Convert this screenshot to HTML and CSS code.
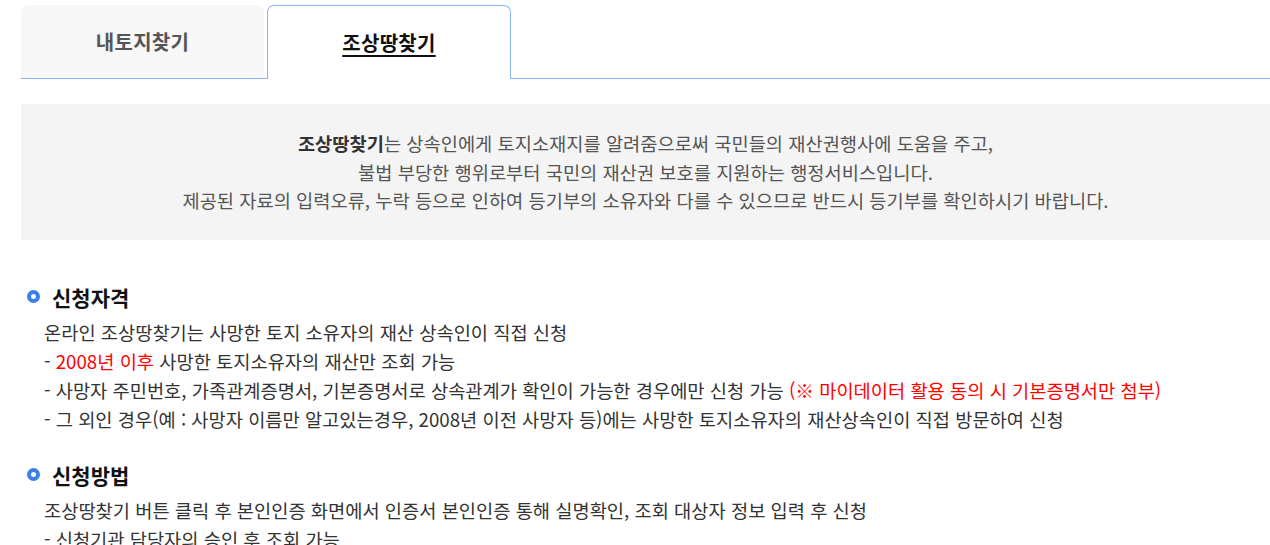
FILE: index.html
```html
<!DOCTYPE html>
<html lang="ko">
<head>
<meta charset="utf-8">
<title>조상땅찾기</title>
<link rel="stylesheet" href="styles.css">
</head>
<body>
<div class="page">
  <div class="tabs">
    <a class="tab">내토지찾기</a>
    <a class="tab active"><span>조상땅찾기</span></a>
  </div>
  <div class="intro">
    <p><strong>조상땅찾기</strong>는 상속인에게 토지소재지를 알려줌으로써 국민들의 재산권행사에 도움을 주고,</p>
    <p>불법 부당한 행위로부터 국민의 재산권 보호를 지원하는 행정서비스입니다.</p>
    <p>제공된 자료의 입력오류, 누락 등으로 인하여 등기부의 소유자와 다를 수 있으므로 반드시 등기부를 확인하시기 바랍니다.</p>
  </div>
  <div class="section">
    <h3 class="title"><span class="dot"></span>신청자격</h3>
    <ul class="desc">
      <li>온라인 조상땅찾기는 사망한 토지 소유자의 재산 상속인이 직접 신청</li>
      <li>- <span class="red">2008년 이후</span> 사망한 토지소유자의 재산만 조회 가능</li>
      <li>- 사망자 주민번호, 가족관계증명서, 기본증명서로 상속관계가 확인이 가능한 경우에만 신청 가능 <span class="red">(※ 마이데이터 활용 동의 시 기본증명서만 첨부)</span></li>
      <li>- 그 외인 경우(예 : 사망자 이름만 알고있는경우, 2008년 이전 사망자 등)에는 사망한 토지소유자의 재산상속인이 직접 방문하여 신청</li>
    </ul>
  </div>
  <div class="section">
    <h3 class="title"><span class="dot"></span>신청방법</h3>
    <ul class="desc">
      <li>조상땅찾기 버튼 클릭 후 본인인증 화면에서 인증서 본인인증 통해 실명확인, 조회 대상자 정보 입력 후 신청</li>
      <li>- 신청기관 담당자의 승인 후 조회 가능</li>
    </ul>
  </div>
</div>
</body>
</html>
```
FILE: styles.css
```css
html, body {
  margin: 0;
  padding: 0;
  background: #fff;
  overflow: hidden;
}
body {
  font-family: "Noto Sans CJK KR", "Noto Sans", sans-serif;
  color: #333;
}
.page {
  padding: 5px 0 0 21px;
}
.tabs {
  display: flex;
  gap: 3px;
  border-bottom: 1px solid #8ab4f8;
  height: 73px;
}
.tab {
  box-sizing: border-box;
  width: 243px;
  height: 73px;
  display: flex;
  align-items: center;
  justify-content: center;
  background: #f7f7f7;
  border-radius: 8px 8px 0 0;
  font-size: 20px;
  letter-spacing: 0.3px;
  font-weight: bold;
  color: #555;
  cursor: pointer;
}
.tab.active {
  width: 244px;
  height: 74px;
  background: #fff;
  border: 1px solid #8ab4f8;
  border-bottom: none;
  border-radius: 7px 7px 0 0;
  color: #111;
}
.tab.active span {
  text-decoration: underline;
  text-underline-offset: 4px;
  text-decoration-thickness: 2px;
}
.intro {
  margin-top: 25px;
  background: #f4f4f4;
  padding: 25px 0;
  text-align: center;
  font-size: 18.7px;
  line-height: 28.5px;
  color: #555;
}
.intro p {
  margin: 0;
}
.intro strong {
  color: #333;
}
.section {
  margin-top: 42px;
}
.section + .section {
  margin-top: 27px;
}
.title {
  margin: 0;
  display: flex;
  align-items: center;
  gap: 12px;
  padding-left: 6px;
  font-size: 21px;
  line-height: 30px;
  color: #111;
  font-weight: bold;
}
.dot {
  box-sizing: border-box;
  width: 13px;
  height: 13px;
  border-radius: 50%;
  border: 4px solid #3a7ee8;
  background: #fff;
}
.desc {
  list-style: none;
  margin: 5px 0 0;
  padding: 0 0 0 23px;
  font-size: 18.7px;
  line-height: 29px;
  color: #333;
}
.red {
  color: #ff0000;
}
```
